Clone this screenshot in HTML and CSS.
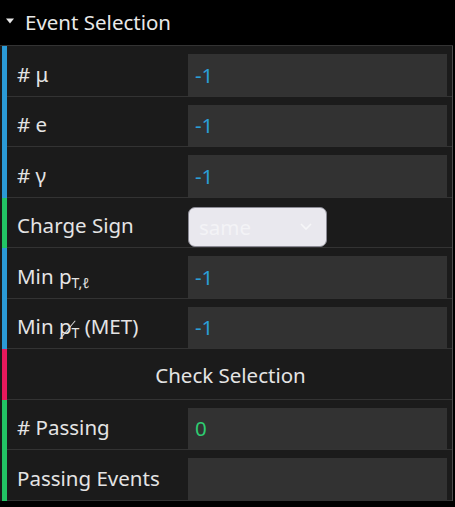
FILE: index.html
```html
<!DOCTYPE html>
<html>
<head>
<meta charset="utf-8">
<link rel="stylesheet" href="styles.css">
</head>
<body>
<div class="panel">
  <div class="header">
    <svg class="caret" width="8" height="6" viewBox="0 0 8 6"><path d="M0 0.5 L8 0.5 L4 5.5 Z" fill="#e8e8e8"/></svg>
    <span class="title">Event Selection</span>
  </div>

  <div class="row">
    <div class="bar blue"></div>
    <div class="cell"><span class="label"># μ</span><div class="input num">-1</div></div>
  </div>
  <div class="row">
    <div class="bar blue"></div>
    <div class="cell"><span class="label"># e</span><div class="input num">-1</div></div>
  </div>
  <div class="row">
    <div class="bar blue"></div>
    <div class="cell"><span class="label"># γ</span><div class="input num">-1</div></div>
  </div>
  <div class="row">
    <div class="bar green"></div>
    <div class="cell"><span class="label">Charge Sign</span>
      <div class="select"><span class="sel-text">same</span>
        <svg class="chev" width="12" height="8" viewBox="0 0 12 8"><path d="M1 1 L6 6 L11 1" fill="none" stroke="#f6f6f8" stroke-width="1.6"/></svg>
      </div>
    </div>
  </div>
  <div class="row">
    <div class="bar blue"></div>
    <div class="cell"><span class="label">Min p<sub class="sub">T,ℓ</sub></span><div class="input num">-1</div></div>
  </div>
  <div class="row">
    <div class="bar blue"></div>
    <div class="cell"><span class="label">Min <span class="slashed">p</span><sub class="sub">T</sub> (MET)</span><div class="input num">-1</div></div>
  </div>
  <div class="row">
    <div class="bar red"></div>
    <div class="cell center"><span class="label">Check Selection</span></div>
  </div>
  <div class="row">
    <div class="bar green"></div>
    <div class="cell"><span class="label"># Passing</span><div class="input ok">0</div></div>
  </div>
  <div class="row">
    <div class="bar green"></div>
    <div class="cell"><span class="label">Passing Events</span><div class="input"></div></div>
  </div>
</div>
</body>
</html>
```

FILE: styles.css
```css
html, body {
  margin: 0;
  padding: 0;
  background: #000;
}
body {
  font-family: "Noto Sans", "Open Sans", sans-serif;
  font-size: 20.5px;
  color: #e6e6e6;
}
.panel {
  width: 453px;
}
.header {
  height: 45px;
  border-bottom: 1px solid #333;
  display: flex;
  align-items: center;
  background: #000;
}
.caret {
  margin-left: 6px;
  margin-right: 11px;
  margin-top: -3px;
}
.title {
  color: #e8e8e8;
  margin-top: -1px;
}
.row {
  display: flex;
  background: #1b1b1b;
  padding-left: 2px;
  border-right: 1px solid #4c4c4c;
}
.bar {
  width: 5px;
  flex: none;
}
.blue { background: #2b9ad6; }
.green { background: #22c465; }
.red { background: #e8185c; }
.cell {
  flex: 1;
  display: flex;
  align-items: center;
  padding: 8px 5px 0 10px;
  border-bottom: 1px solid #333;
  height: 41.5px;
}
.cell.center {
  justify-content: center;
  padding-left: 5px;
}
.label {
  width: 171px;
  flex: none;
  white-space: nowrap;
  color: #e4e4e4;
  margin-top: -2px;
}
.center .label {
  width: auto;
  margin-top: -5px;
  padding-left: 2px;
}
.sub {
  font-size: 14px;
  vertical-align: -4px;
  line-height: 0;
}
.slashed {
  position: relative;
  display: inline-block;
}
.slashed::after {
  content: "";
  position: absolute;
  left: 8px;
  top: 6px;
  width: 1.2px;
  height: 24px;
  background: #d8d8d8;
  transform: rotate(40deg);
  transform-origin: center;
}
.input {
  flex: 1;
  height: 41.5px;
  background: #323232;
  box-sizing: border-box;
  padding-left: 7px;
  display: flex;
  align-items: center;
  line-height: 1;
}
.input.num { color: #2a9fd6; }
.input.ok { color: #2ecc71; }
.select {
  width: 139px;
  height: 39.5px;
  box-sizing: border-box;
  border: 1.5px solid #8b8a94;
  border-radius: 7px;
  background: #e9e8ee;
  display: flex;
  align-items: center;
  justify-content: space-between;
  padding: 0 14px 0 10px;
  margin-top: 1px;
}
.sel-text {
  color: #f3f3f6;
}
.chev {
  margin-top: 1px;
}
```
